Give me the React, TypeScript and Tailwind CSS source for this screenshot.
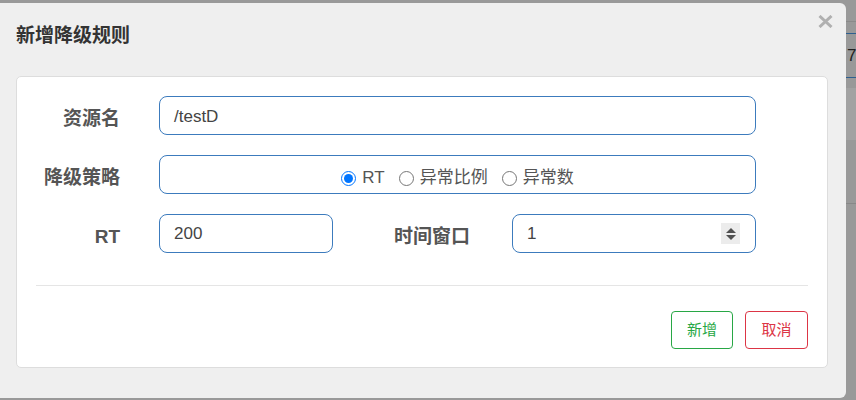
const FONT = 'font-["Liberation_Sans","Noto_Sans_CJK_SC",sans-serif]';

function Label({ text, width }: { text: string; width: string }) {
  return (
    <div className={`${width} h-[39px] shrink-0 pr-[2px] pt-[3px] text-right text-[19px] font-bold leading-[39px] text-[#555]`}>
      {text}
    </div>
  );
}

function Radio({ label, checked }: { label: string; checked?: boolean }) {
  return (
    <label className="flex items-center gap-[6px]">
      <input type="radio" name="grade" defaultChecked={checked} className="m-0 h-[15px] w-[15px]" />
      <span>{label}</span>
    </label>
  );
}

// 降级规则弹窗: 资源名 / 降级策略 / RT + 时间窗口
export default function App() {
  return (
    <div className={`${FONT} flex h-[400px] w-[856px] items-start overflow-hidden bg-[#999]`}>
      <div className="mt-[3px] flex h-[395px] w-[846px] shrink-0 flex-col rounded-r-[6px] bg-[#efefef]">
        <div className="flex items-start justify-between pl-[16px] pr-[13px]">
          <h4 className="mt-[20px] text-[19px] font-bold leading-[26px] text-[#333]">新增降级规则</h4>
          <svg className="mt-[12px] h-[13px] w-[15px]" viewBox="0 0 15 13" aria-hidden>
            <path d="M1.5 1 L13.5 12 M13.5 1 L1.5 12" stroke="#b0b0b0" strokeWidth="3" />
          </svg>
        </div>

        <div className="ml-[16px] mr-[18px] mt-[27px] flex flex-col rounded-[5px] border border-[#ddd] bg-white pb-[18px] pt-[19px]">
          <div className="flex flex-col gap-[20px]">
            <div className="flex">
              <Label text="资源名" width="w-[105px]" />
              <div className="ml-[37px] flex h-[39px] w-[597px] items-center rounded-[8px] border border-[#3c7bbd] px-[14px] pt-[2px] text-[17px] text-[#444]">
                /testD
              </div>
            </div>

            <div className="flex">
              <Label text="降级策略" width="w-[105px]" />
              <div className="ml-[37px] flex h-[39px] w-[597px] items-center justify-center gap-[14px] rounded-[8px] border border-[#3c7bbd] pt-[7px] text-[17px] text-[#555]">
                <Radio label="RT" checked />
                <Radio label="异常比例" />
                <Radio label="异常数" />
              </div>
            </div>

            <div className="flex">
              <Label text="RT" width="w-[105px]" />
              <div className="ml-[37px] flex h-[39px] w-[174px] items-center rounded-[8px] border border-[#3c7bbd] px-[14px] text-[17px] text-[#444]">
                200
              </div>
              <Label text="时间窗口" width="w-[139px]" />
              <div className="ml-[40px] flex h-[39px] w-[244px] items-center justify-between rounded-[8px] border border-[#3c7bbd] pl-[14px] pr-[15px] text-[17px] text-[#444]">
                <span>1</span>
                <span className="flex h-[21px] w-[19px] flex-col items-center justify-center gap-[2px] bg-[#ececec]">
                  <svg width="10" height="5" viewBox="0 0 10 5" aria-hidden>
                    <path d="M0 5 L5 0 L10 5 Z" fill="#505050" />
                  </svg>
                  <svg width="10" height="5" viewBox="0 0 10 5" aria-hidden>
                    <path d="M0 0 L10 0 L5 5 Z" fill="#505050" />
                  </svg>
                </span>
              </div>
            </div>
          </div>

          <div className="mx-[19px] mt-[32px] h-px bg-[#e5e5e5]" />

          <div className="mr-[19px] mt-[25px] flex justify-end gap-[12px]">
            <button className="h-[38px] w-[62px] rounded-[4px] border border-[#28a745] text-[15px] text-[#28a745]">
              新增
            </button>
            <button className="h-[38px] w-[63px] rounded-[4px] border border-[#dc3545] text-[15px] text-[#dc3545]">
              取消
            </button>
          </div>
        </div>
      </div>

      <div className="flex h-[400px] flex-1 flex-col">
        <div className="mt-[21px] h-px bg-[#8a8a8a]" />
        <div className="mt-[11px] h-px bg-[#2f5f8f]" />
        <div className="h-[43px] pl-px text-[17px] leading-[43px] text-[#222]">7</div>
        <div className="h-px bg-[#2f5f8f]" />
        <div className="mt-[10px] h-[52px] bg-[#a2a2a2]" />
        <div className="mt-[63px] h-px bg-[#888]" />
      </div>
    </div>
  );
}
